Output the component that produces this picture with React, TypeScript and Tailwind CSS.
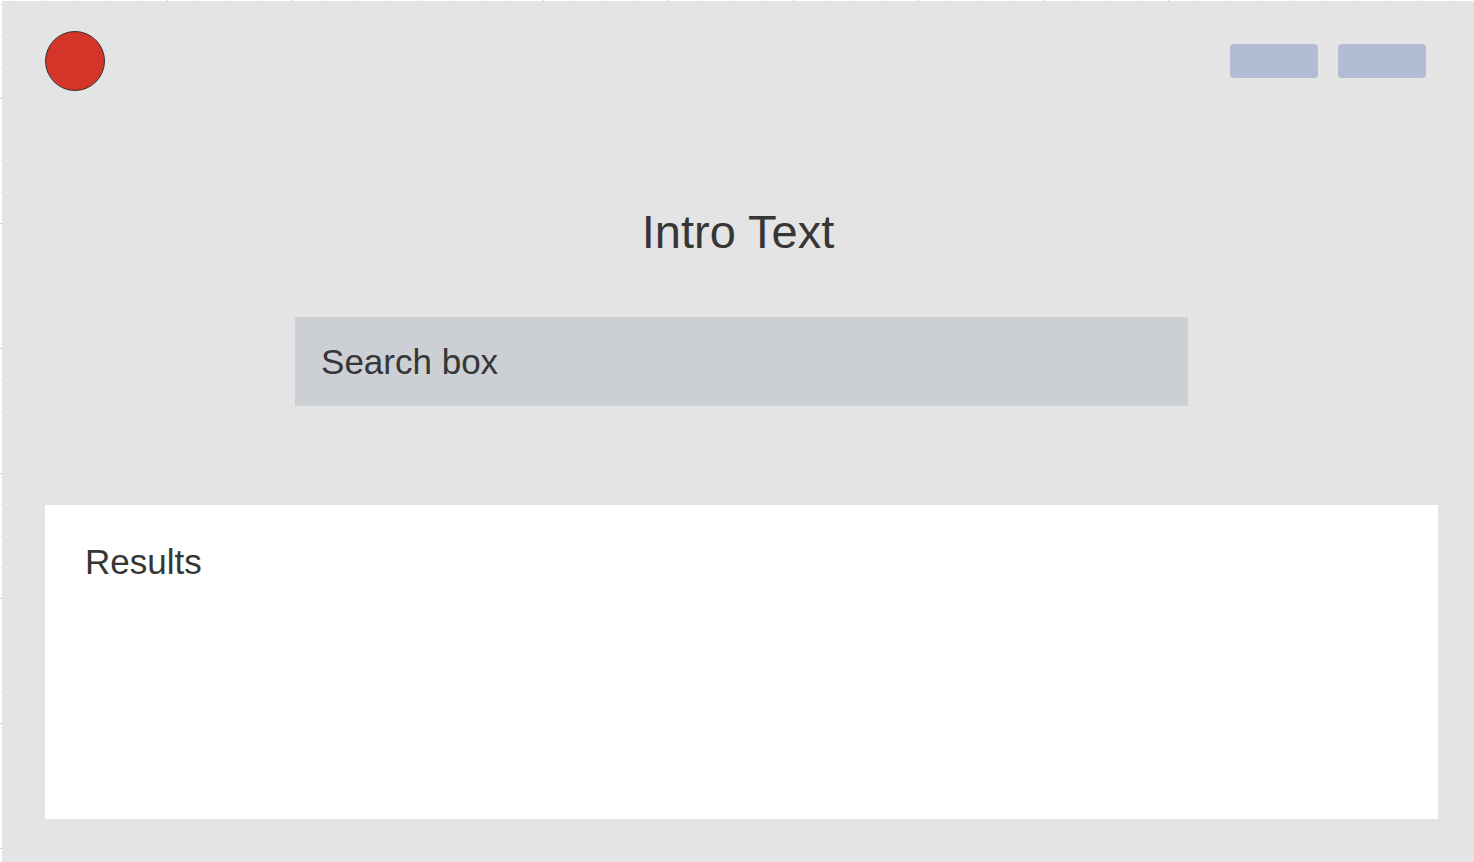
import React from "react";

function GridRuler({ vertical = false }: { vertical?: boolean }) {
  const ticks = Array.from({ length: 48 }, (_, i) => i);
  const start = vertical ? 4 : 11;
  const majorIndex = vertical ? 3 : 1;
  return (
    <svg
      aria-hidden="true"
      className={
        vertical
          ? "pointer-events-none absolute left-0 top-0 h-full w-0.5"
          : "pointer-events-none absolute left-0 top-0 h-px w-full"
      }
    >
      {ticks.map((i) => {
        const at = Math.round(start + i * 31.27);
        const color = i % 4 === majorIndex ? "#d2d2d2" : "#ececec";
        return vertical ? (
          <rect key={i} x={0} y={at} width={2} height={1} fill={color} />
        ) : (
          <rect key={i} x={at} y={0} width={1} height={1} fill={color} />
        );
      })}
    </svg>
  );
}

function Header() {
  return (
    <header className="flex items-center justify-between pl-[43px] pr-12">
      <a
        href="#home"
        aria-label="Home"
        className="size-[60px] rounded-full border border-[#333333] bg-[#d53429]"
      />
      <nav aria-label="Account" className="flex gap-5">
        <button type="button" aria-label="Sign in" className="h-[34px] w-[88px] rounded bg-[#b2bcd5]" />
        <button type="button" aria-label="Sign up" className="h-[34px] w-[88px] rounded bg-[#b2bcd5]" />
      </nav>
    </header>
  );
}

export default function App() {
  return (
    <div className="relative flex min-h-screen flex-col bg-white pl-0.5 pt-px font-['Liberation_Sans',Arial,sans-serif] text-[#363636]">
      <GridRuler />
      <GridRuler vertical />
      <div className="flex grow flex-col bg-[#e4e4e4] pb-[43px] pt-[30px]">
        <Header />
        <main className="flex grow flex-col">
          <h1 className="mt-[113px] text-center text-[47px] leading-[56px]">Intro Text</h1>
          <div className="flex grow flex-col pl-[43px] pr-9">
            <form role="search" className="mt-[57px] flex justify-center">
              <input
                type="search"
                aria-label="Search"
                placeholder="Search box"
                className="h-[89px] w-[64.1%] appearance-none bg-[#cccfd4] px-[26px] text-[35px] placeholder:text-[#363636] placeholder:opacity-100"
              />
            </form>
            <section aria-labelledby="results-title" className="mt-[99px] grow bg-white px-10 py-9">
              <h2 id="results-title" className="text-[35px] leading-[42px]">
                Results
              </h2>
            </section>
          </div>
        </main>
      </div>
    </div>
  );
}
